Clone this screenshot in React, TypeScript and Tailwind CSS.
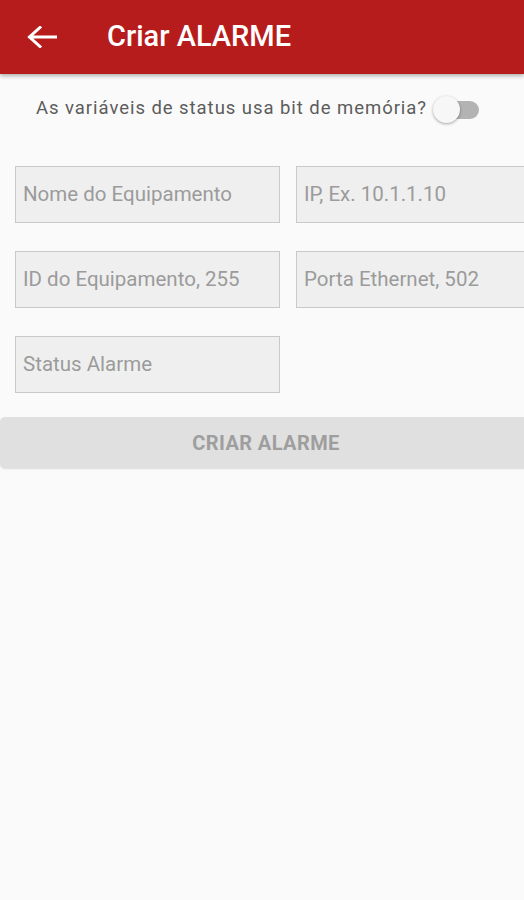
export default function App() {
  const font = { fontFamily: 'Roboto, "Noto Sans", sans-serif' }

  return (
    <div className="h-[900px] w-[524px] overflow-hidden bg-[#fafafa]" style={font}>
      {/* App bar */}
      <header className="relative z-10 flex h-[74px] items-center bg-[#b71c1c] shadow-[0_2px_4px_rgba(0,0,0,0.3)]">
        <svg className="ml-[27px] h-[22px] w-[30px]" viewBox="0 0 30 22" fill="none">
          <path d="M29 11H3M13 1.5L2.5 11L13 20.5" stroke="white" strokeWidth="3" strokeLinecap="square" />
        </svg>
        <h1 className="ml-[50px] text-[29px] font-medium text-white">Criar ALARME</h1>
      </header>

      {/* Switch row */}
      <div className="mt-[23px] flex h-[24px] items-center pl-[36px]">
        <span className="text-[18.5px] tracking-[0.95px] text-[#5c5c5c]">As variáveis de status usa bit de memória?</span>
        <div className="relative ml-[6px] h-[24px] w-[46px]">
          <div className="absolute left-[8px] top-[4px] h-[18px] w-[38px] rounded-full bg-[#b3b3b3]" />
          <div className="absolute left-0 top-[-1px] h-[27px] w-[27px] rounded-full bg-[#f7f7f7] shadow-[0_1px_3px_rgba(0,0,0,0.35)]" />
        </div>
      </div>

      {/* Fields */}
      <div className="mt-[45px] grid w-[575px] grid-cols-[265px_265px] gap-x-[16px] gap-y-[28px] pl-[15px]">
        {['Nome do Equipamento', 'IP, Ex. 10.1.1.10', 'ID do Equipamento, 255', 'Porta Ethernet, 502', 'Status Alarme'].map(
          (label) => (
            <div
              key={label}
              className="flex h-[57px] items-center border-[1.5px] border-[#c9c9c9] bg-[#efefef] pl-[7px] text-[20.5px] text-[#9b9b9b]"
            >
              {label}
            </div>
          ),
        )}
      </div>

      {/* Button */}
      <div className="mt-[24px] flex h-[51px] w-[532px] items-center justify-center rounded-[5px] bg-[#e0e0e0] shadow-[0_1px_2px_rgba(0,0,0,0.12)]">
        <span className="text-[20px] font-bold tracking-[0.4px] text-[#9e9e9e]">CRIAR ALARME</span>
      </div>
    </div>
  )
}
